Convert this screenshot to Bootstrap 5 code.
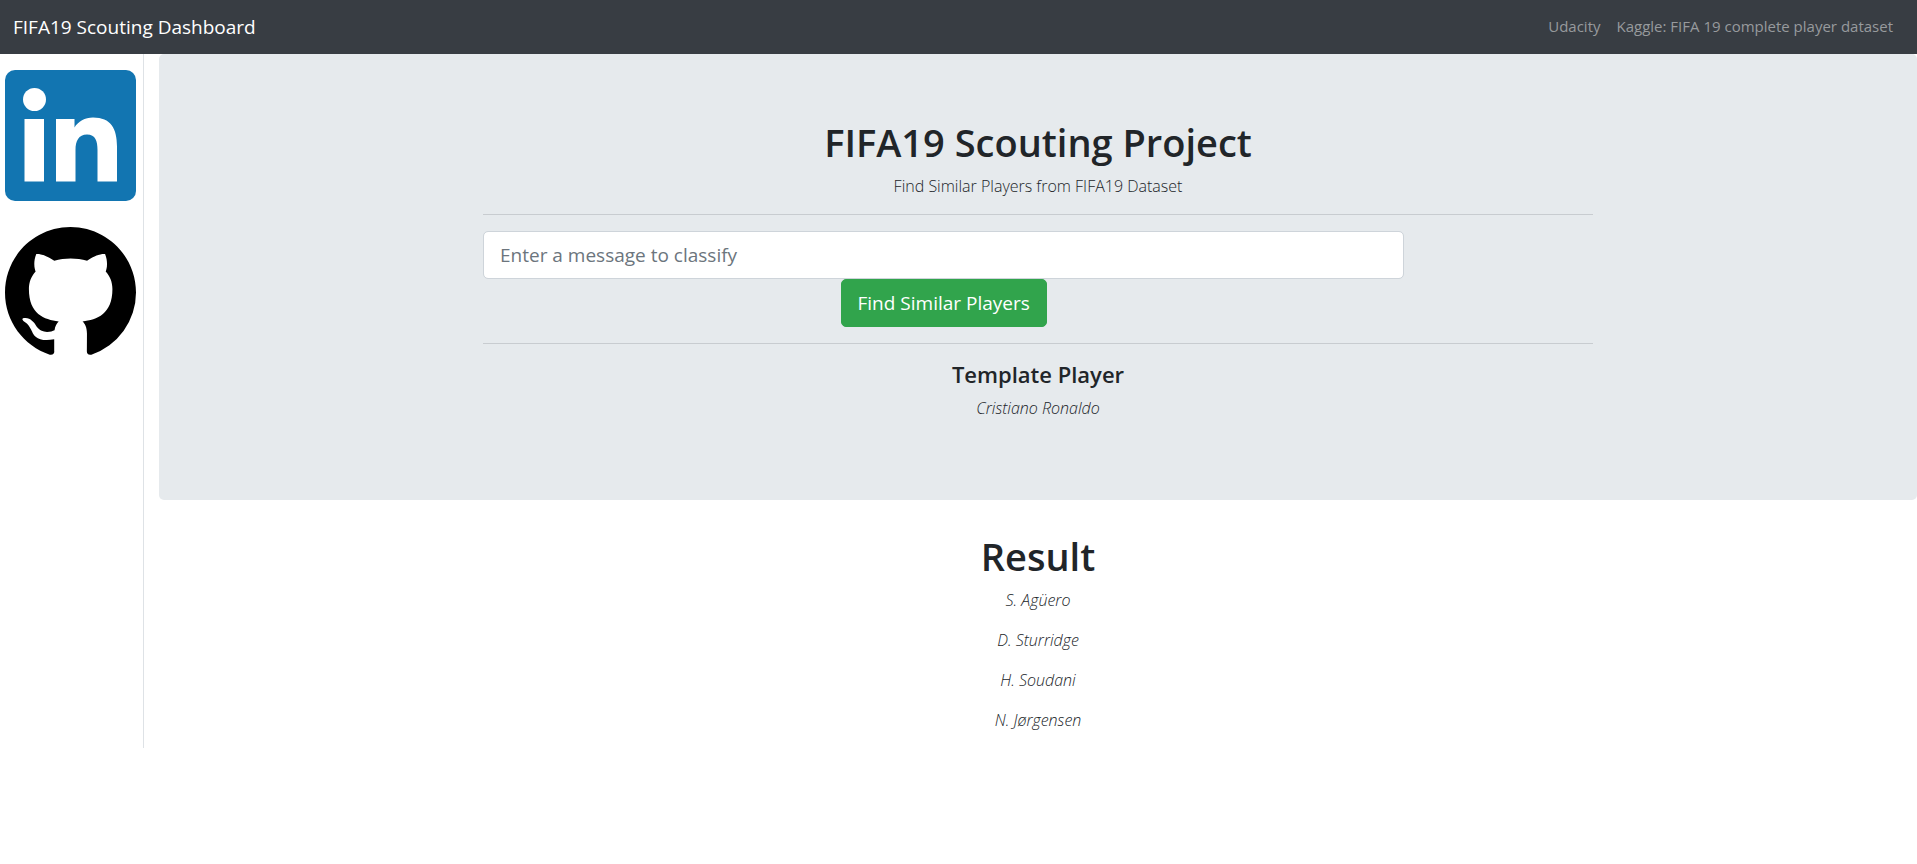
<!DOCTYPE html>
<html lang="en">
<head>
<meta charset="utf-8">
<meta name="viewport" content="width=device-width, initial-scale=1">
<title>FIFA19 Scouting Dashboard</title>
<link rel="stylesheet" href="https://cdn.jsdelivr.net/npm/bootstrap@5.3.0/dist/css/bootstrap.min.css">
<style>
  body { font-family: "Open Sans", "Noto Sans", sans-serif; font-size: 16px; line-height: 24px; color: #212529; }
  .topbar { background: #383d43; min-height: 54px; padding: 0 24px 0 13px; }
  .topbar .navbar-brand { font-size: 19px; line-height: 30px; padding: 0; }
  .topbar .nav-link { font-size: 15px; color: #979a9d; padding: 0 0 2px; }
  .side-links { flex: 0 0 144px; padding: 16px 7px 0 5px; gap: 26px; border-right: 1px solid #dee2e6; }
  .side-links a, .side-links svg { display: block; width: 100%; }
  .content { padding-left: 15px; }
  .hero { background: #e6eaed; border-radius: 5px; padding: 64px 32px; margin-bottom: 32px; }
  .hero-inner { max-width: 1110px; }
  .hero hr { margin: 16px 0; color: #c8ccd0; opacity: 1; }
  h1, h2 { font-size: 38px; line-height: 48px; font-weight: 600; margin-bottom: 8px; }
  h3 { font-size: 22px; line-height: 28px; font-weight: 600; margin-bottom: 8px; }
  p { font-weight: 300; margin-bottom: 16px; }
  .search-col { width: 83%; }
  .search-col .form-control, .search-col .btn { height: 48px; font-size: 19px; line-height: 30px; padding: 8px 16px; border-radius: 5px; }
  .search-col .form-control { border-color: #ced4da; }
  .search-col .form-control::placeholder { color: #6c757d; }
  .search-col .btn { background: #31a44c; border-color: #31a44c; color: #fff; }
</style>
</head>
<body>
<nav class="navbar navbar-dark topbar d-flex">
  <a class="navbar-brand" href="#">FIFA19 Scouting Dashboard</a>
  <ul class="navbar-nav flex-row gap-3">
    <li class="nav-item"><a class="nav-link" href="#">Udacity</a></li>
    <li class="nav-item"><a class="nav-link" href="#">Kaggle: FIFA 19 complete player dataset</a></li>
  </ul>
</nav>
<div class="d-flex">
  <aside class="side-links d-flex flex-column">
    <a href="#" aria-label="LinkedIn">
      <svg viewBox="0 0 131 131" aria-hidden="true">
        <rect width="131" height="131" rx="10" fill="#1275b1"/>
        <g fill="#fff">
          <circle cx="29.500" cy="29.500" r="11.500"/>
          <path d="M19.500 49H39v62.500H19.500zM51 49h18.500v8.500C73 51.500 80 47.500 88 47.500c18 0 24 11 24 29v35H92.500V80c0-9-2-15.500-10.500-15.500S70.500 71 70.500 80v31.500H51z"/>
        </g>
      </svg>
    </a>
    <a href="#" aria-label="GitHub">
      <svg viewBox="0 0 16 16" aria-hidden="true">
        <path fill="#000" d="M8 0C3.580 0 0 3.580 0 8c0 3.540 2.290 6.530 5.470 7.590.4.070.55-.17.55-.38 0-.19-.01-.82-.01-1.490-2.010.37-2.530-.49-2.690-.94-.09-.23-.48-.94-.82-1.130-.28-.15-.68-.52-.01-.53.63-.01 1.080.58 1.230.82.72 1.210 1.870.87 2.330.66.070-.52.28-.87.51-1.070-1.780-.2-3.640-.89-3.640-3.950 0-.87.31-1.590.82-2.150-.08-.2-.36-1.020.08-2.120 0 0 .67-.21 2.200.82.64-.18 1.320-.27 2-.27s1.360.09 2 .27c1.530-1.040 2.200-.82 2.200-.82.44 1.100.16 1.920.08 2.120.51.56.82 1.270.82 2.150 0 3.070-1.870 3.750-3.650 3.950.29.25.54.73.54 1.480 0 1.070-.01 1.930-.01 2.200 0 .21.15.46.55.38A8.010 8.010 0 0 0 16 8c0-4.420-3.580-8-8-8z"/>
      </svg>
    </a>
  </aside>
  <main class="content flex-grow-1 text-center">
    <section class="hero">
      <div class="hero-inner mx-auto">
        <h1>FIFA19 Scouting Project</h1>
        <p>Find Similar Players from FIFA19 Dataset</p>
        <hr>
        <form class="search-col" onsubmit="return false">
          <input type="text" class="form-control" placeholder="Enter a message to classify" aria-label="Message to classify">
          <button type="submit" class="btn d-block mx-auto">Find Similar Players</button>
        </form>
        <hr>
        <h3>Template Player</h3>
        <p class="fst-italic">Cristiano Ronaldo</p>
      </div>
    </section>
    <section>
      <h2>Result</h2>
      <p class="fst-italic">S. Agüero</p>
      <p class="fst-italic">D. Sturridge</p>
      <p class="fst-italic">H. Soudani</p>
      <p class="fst-italic">N. Jørgensen</p>
    </section>
  </main>
</div>
<script src="https://cdn.jsdelivr.net/npm/bootstrap@5.3.0/dist/js/bootstrap.bundle.min.js"></script>
</body>
</html>
